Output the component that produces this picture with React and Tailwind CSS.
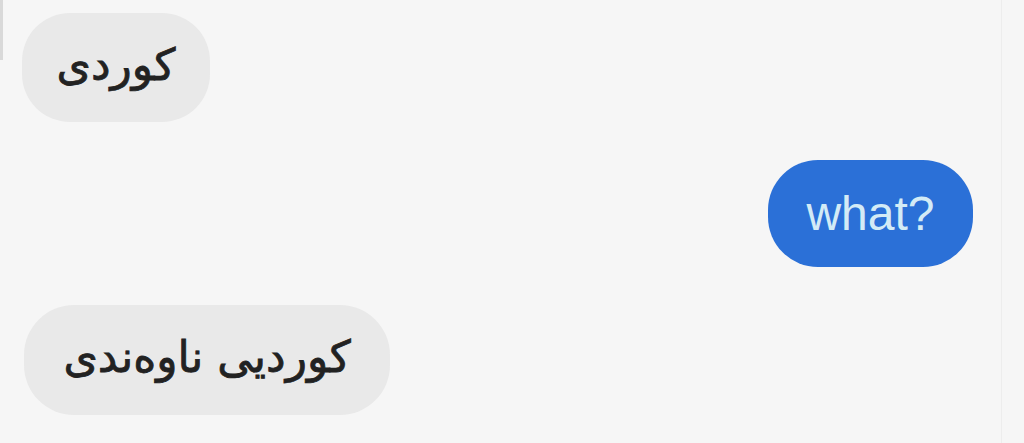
export default function App() {
  return (
    <div className="w-[1024px] h-[443px] bg-[#f6f6f6] overflow-hidden flex flex-col relative" style={{ fontFamily: '"DejaVu Sans", sans-serif' }}>
      <div className="absolute left-0 top-0 w-[3px] h-[60px] bg-[#d9d9d9]" />
      <div className="absolute right-[22px] top-0 w-px h-full bg-[#ededed]" />
      <div className="flex pl-[22px] pt-[13px]">
        <div dir="rtl" className="h-[109px] w-[188px] rounded-[48px] bg-[#e9e9e9] flex items-center justify-center text-[44px] text-[#222] pb-[6px] [-webkit-text-stroke:0.8px_#222]">
          کوردی
        </div>
      </div>
      <div className="flex justify-end pr-[51px] pt-[38px]">
        <div className="h-[107px] w-[205px] rounded-[50px] bg-[#2b70d7] flex items-center justify-center text-[48px] text-[#d3ebf6]" style={{ fontFamily: '"Liberation Sans", Arial, sans-serif' }}>
          what?
        </div>
      </div>
      <div className="flex pl-[24px] pt-[38px]">
        <div dir="rtl" className="h-[110px] w-[366px] rounded-[50px] bg-[#e9e9e9] flex items-center justify-center text-[44px] text-[#222] pb-[6px] [-webkit-text-stroke:0.8px_#222]">
          کوردیی ناوەندی
        </div>
      </div>
    </div>
  );
}
